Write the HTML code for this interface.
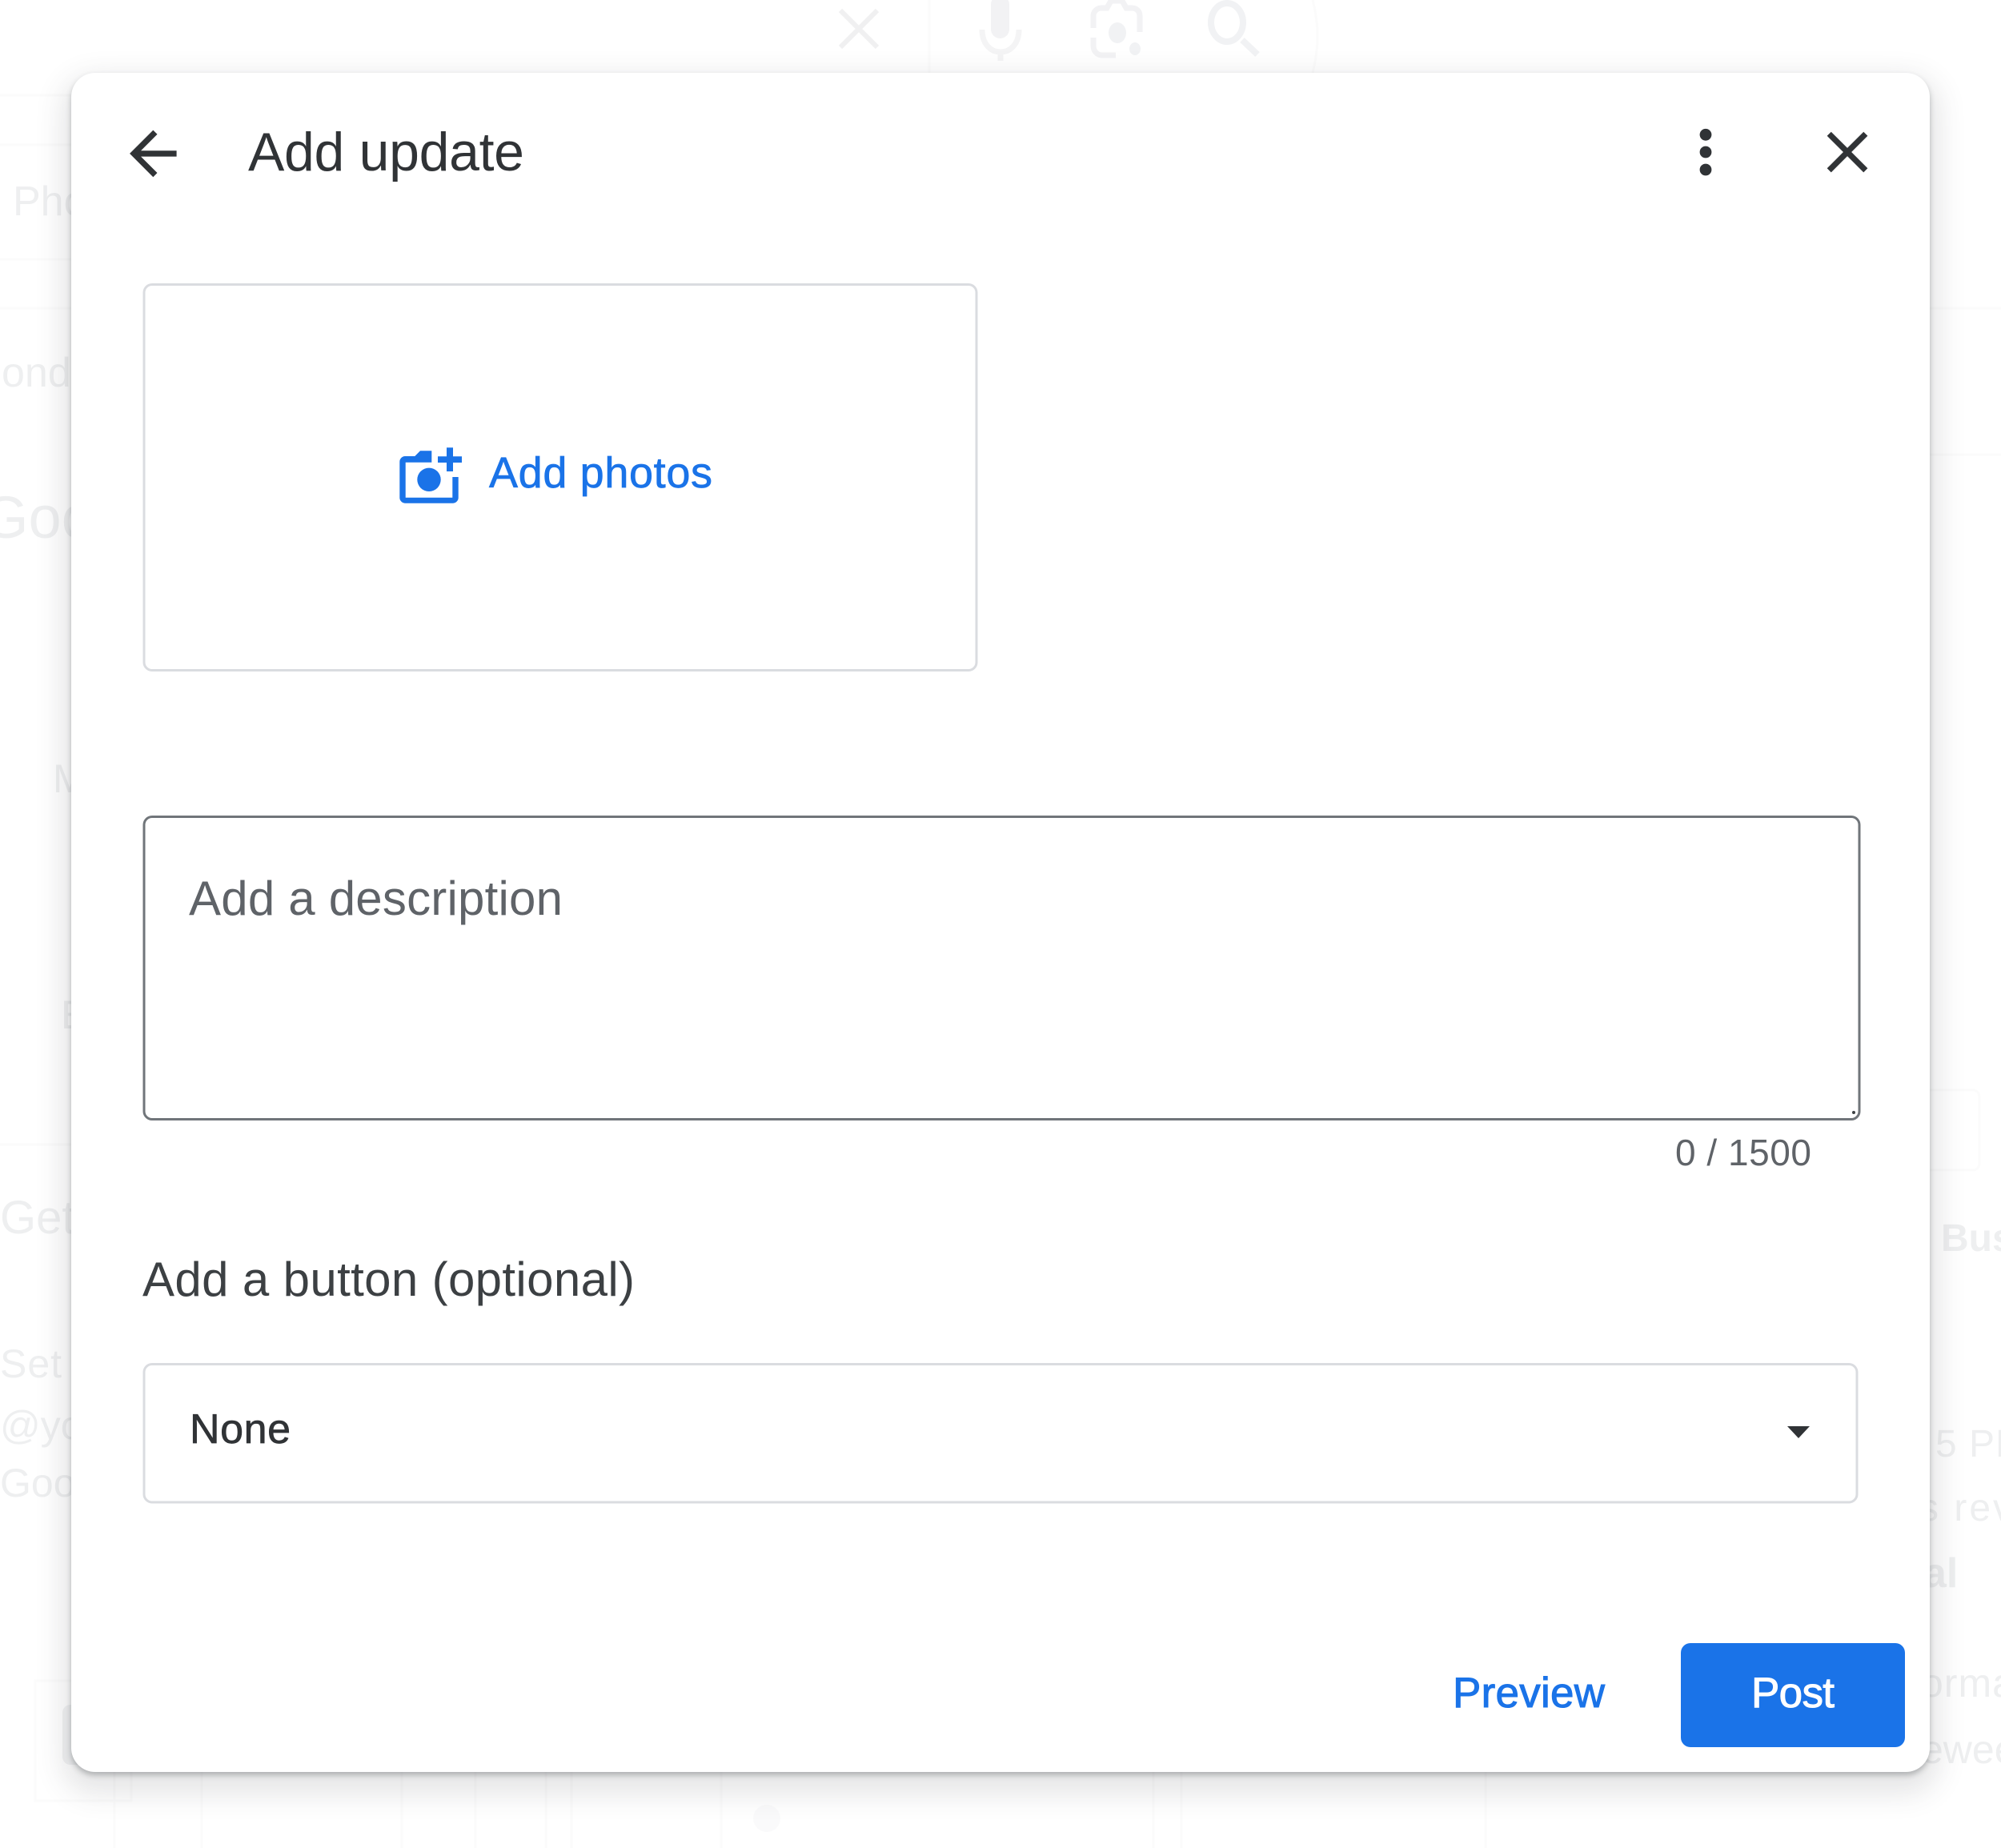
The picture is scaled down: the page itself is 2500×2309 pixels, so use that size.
<!DOCTYPE html>
<html lang="en">
<head>
<meta charset="utf-8">
<title>Add update</title>
<style>
html,body{margin:0;padding:0;background:#fff;width:2500px;height:2309px;overflow:hidden}
svg{position:absolute;left:0;top:0}
text{font-family:"Liberation Sans",sans-serif}
#modal{position:absolute;left:89px;top:91px;width:2322px;height:2123px;background:#fff;border-radius:30px;
box-shadow:0 4px 7px rgba(60,64,67,.32),0 16px 34px 12px rgba(60,64,67,.13)}
</style>
</head>
<body>
<svg width="2500" height="2309" viewBox="0 0 2500 2309">
  <g fill="none" stroke="#fbfbfb" stroke-width="3">
    <line x1="0" y1="119" x2="89" y2="119"/>
    <rect x="-40" y="181" width="200" height="143" rx="40"/>
    <line x1="0" y1="385" x2="89" y2="385"/>
    <line x1="2411" y1="385" x2="2500" y2="385"/>
    <line x1="2411" y1="568" x2="2500" y2="568"/>
    <line x1="0" y1="1430" x2="89" y2="1430"/>
    <rect x="2380" y="1362" width="93" height="100" rx="8"/>
    <rect x="44" y="2100" width="120" height="150"/>
    <line x1="143" y1="2214" x2="143" y2="2309"/>
    <line x1="252" y1="2214" x2="252" y2="2309"/>
    <line x1="502" y1="2214" x2="502" y2="2309"/>
    <line x1="594" y1="2214" x2="594" y2="2309"/>
    <line x1="682" y1="2214" x2="682" y2="2309"/>
    <line x1="714" y1="2214" x2="714" y2="2309"/>
    <line x1="901" y1="2214" x2="901" y2="2309"/>
    <line x1="1441" y1="2214" x2="1441" y2="2309"/>
    <line x1="1476" y1="2214" x2="1476" y2="2309"/>
    <line x1="1856" y1="2214" x2="1856" y2="2309"/>
    <line x1="1161" y1="0" x2="1161" y2="91"/>
    <path d="M1640 0c8 30 8 60 0 91"/>
  </g>
  <rect x="78" y="2130" width="30" height="75" rx="10" fill="#f1f2f3"/>
  <ellipse cx="958" cy="2272" rx="17" ry="17" fill="#fafafb"/>

  <!-- faint top icons -->
  <path d="M1050 13L1096 59M1096 13L1050 59" stroke="#f0f0f1" stroke-width="6" fill="none"/>
  <rect x="1238" y="-6" width="23" height="54" rx="11.5" fill="#f2f2f4"/>
  <path d="M1227 37c0 17 10 28 23 28s23-11 23-28M1250 65v11" fill="none" stroke="#f4f4f5" stroke-width="7"/>
  <path d="M1366 35V20c0-6 5-10 10-10h7l5-9h14l5 9h7c6 0 10 4 10 10v20M1366 47v10c0 7 5 12 11 12h17" fill="none" stroke="#f2f2f4" stroke-width="7"/>
  <ellipse cx="1396" cy="41" rx="11" ry="13" fill="#f1f2f4"/>
  <ellipse cx="1418" cy="61" rx="7" ry="8" fill="#f1f2f4"/>
  <ellipse cx="1533" cy="28" rx="20" ry="24" fill="none" stroke="#f1f2f4" stroke-width="8"/>
  <path d="M1552 50L1571 68" fill="none" stroke="#f1f2f4" stroke-width="8"/>

  <!-- faint background text -->
  <g fill="#eeeff0">
    <text x="16" y="269" font-size="52">Phone</text>
    <text x="2" y="483" font-size="52">ond</text>
    <text x="-22" y="672" font-size="74">Goo</text>
    <text x="66" y="990" font-size="50">M</text>
    <text x="76" y="1285" font-size="50">E</text>
    <text x="0" y="1541" font-size="58">Get</text>
    <text x="0" y="1721" font-size="50" letter-spacing="1">Set</text>
    <text x="0" y="1798" font-size="50">@you</text>
    <text x="0" y="1870" font-size="50">Goo</text>
    <text x="2425" y="1563" font-size="48" font-weight="bold">Bus</text>
    <text x="2418" y="1820" font-size="48" letter-spacing="1">5 PM</text>
    <text x="2398" y="1900" font-size="48" letter-spacing="3">s rev</text>
    <text x="2403" y="1983" font-size="52" font-weight="bold">al</text>
    <text x="2400" y="2120" font-size="50" letter-spacing="1">orma</text>
    <text x="2400" y="2203" font-size="50">ewee</text>
  </g>
</svg>

<div id="modal"></div>

<svg width="2500" height="2309" viewBox="0 0 2500 2309">
  <!-- header -->
  <path transform="translate(147.4 148) scale(3.66)" fill="#303336" d="M20 11H7.83l5.59-5.59L12 4l-8 8 8 8 1.41-1.41L7.83 13H20v-2z"/>
  <text x="310" y="213" font-size="68" fill="#303336" textLength="345" lengthAdjust="spacing">Add update</text>
  <circle cx="2131" cy="168.3" r="7.4" fill="#303336"/>
  <circle cx="2131" cy="190" r="7.4" fill="#303336"/>
  <circle cx="2131" cy="212" r="7.4" fill="#303336"/>
  <path transform="translate(2264.6 146.6) scale(3.62)" fill="#303336" d="M19 6.41L17.59 5 12 10.59 6.41 5 5 6.41 10.59 12 5 17.59 6.41 19 12 13.41 17.59 19 19 17.59 13.41 12z"/>

  <!-- add photos box -->
  <rect x="180" y="355.500" width="1040" height="482" rx="10" fill="#fff" stroke="#dadce0" stroke-width="3"/>
  <path fill="#1a73e8" d="M539.300 563.300H525L518.300 570H506a7 7 0 0 0-6.700 7V622a7 7 0 0 0 6.700 6.700H566a7 7 0 0 0 6.700-6.700V596H565.300V621.700H506.700V577.700H539.300Z"/>
  <circle cx="536" cy="599.300" r="14.700" fill="#1a73e8"/>
  <path fill="#1a73e8" d="M558 559.300h8v11h11v7.700h-11v11h-8v-11h-11v-7.700h11z"/>
  <text x="611" y="609" font-size="54" fill="#1a73e8" stroke="#1a73e8" stroke-width=".7" textLength="279" lengthAdjust="spacing">Add photos</text>

  <!-- description -->
  <rect x="180" y="1020.500" width="2143" height="378" rx="10" fill="#fff" stroke="#70757a" stroke-width="3"/>
  <circle cx="2316" cy="1390" r="2" fill="#3c4043"/>
  <text x="236" y="1143" font-size="60" fill="#5f6368" textLength="467" lengthAdjust="spacing">Add a description</text>
  <text x="2093" y="1456" font-size="46" fill="#5f6368" textLength="170" lengthAdjust="spacing">0 / 1500</text>

  <!-- button select -->
  <text x="178" y="1619" font-size="60" fill="#3c4043" textLength="615" lengthAdjust="spacing">Add a button (optional)</text>
  <rect x="180" y="1704.500" width="2140" height="172.500" rx="10" fill="#fff" stroke="#dadce0" stroke-width="3"/>
  <text x="237" y="1803" font-size="52" fill="#303336" stroke="#303336" stroke-width=".7" textLength="126" lengthAdjust="spacing">None</text>
  <path d="M2233 1782h28l-14 15z" fill="#303336"/>

  <!-- actions -->
  <text x="1815" y="2133" font-size="53" fill="#1a73e8" stroke="#1a73e8" stroke-width="1" textLength="190" lengthAdjust="spacing">Preview</text>
  <rect x="2100" y="2053" width="280" height="130" rx="12" fill="#1a73e8"/>
  <text x="2188" y="2133" font-size="53" fill="#fff" stroke="#fff" stroke-width="1" textLength="104" lengthAdjust="spacing">Post</text>
</svg>
</body>
</html>
